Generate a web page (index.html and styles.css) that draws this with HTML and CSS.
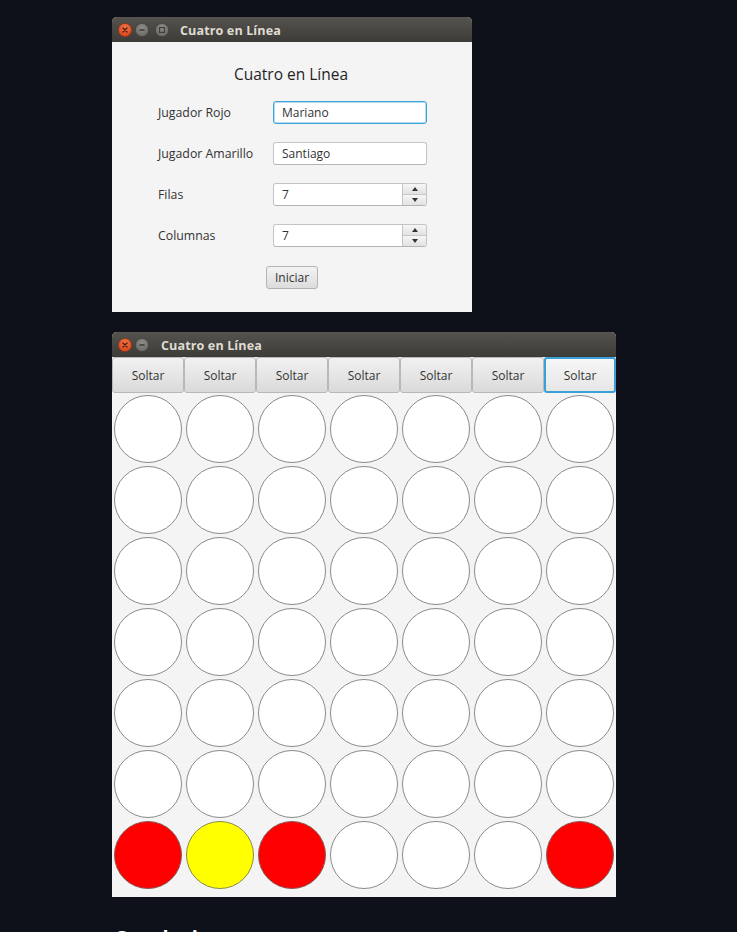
FILE: index.html
```html
<!DOCTYPE html>
<html lang="es">
<head>
<meta charset="utf-8">
<title>Cuatro en Línea</title>
<link rel="stylesheet" href="styles.css">
</head>
<body>
<div class="desk">
  <div class="win win-setup">
    <div class="titlebar">
      <div class="wbtns">
        <svg class="wbtn" width="14" height="14" viewBox="0 0 14 14"><defs><radialGradient id="gc" cx="50%" cy="35%" r="65%"><stop offset="0" stop-color="#f4794a"/><stop offset="1" stop-color="#d8431a"/></radialGradient></defs><circle cx="7" cy="7" r="6.6" fill="url(#gc)" stroke="#8c2e10" stroke-width="0.6"/><path d="M5 5 L9 9 M9 5 L5 9" stroke="#4a1a08" stroke-width="1.3" stroke-linecap="round"/></svg>
        <svg class="wbtn" width="14" height="14" viewBox="0 0 14 14"><defs><radialGradient id="gm" cx="50%" cy="35%" r="65%"><stop offset="0" stop-color="#8f8d88"/><stop offset="1" stop-color="#6a6864"/></radialGradient></defs><circle cx="7" cy="7" r="6.6" fill="url(#gm)" stroke="#3a3935" stroke-width="0.6"/><path d="M4.5 7 H9.5" stroke="#3b3a36" stroke-width="1.3"/></svg>
        <svg class="wbtn wbtn-max" width="14" height="14" viewBox="0 0 14 14"><circle cx="7" cy="7" r="6.6" fill="url(#gm)" stroke="#3a3935" stroke-width="0.6"/><rect x="4.6" y="4.6" width="4.8" height="4.8" fill="none" stroke="#3b3a36" stroke-width="1.1"/></svg>
      </div>
      <span class="wtitle">Cuatro en Línea</span>
    </div>
    <div class="setup-body">
      <div class="setup-heading">Cuatro en Línea</div>
      <div class="form">
        <span class="lbl">Jugador Rojo</span>
        <div class="field field-focused">Mariano</div>
        <span class="lbl">Jugador Amarillo</span>
        <div class="field">Santiago</div>
        <span class="lbl">Filas</span>
        <div class="field spinner"><span class="spin-val">7</span><span class="spin-arrows"><span class="arr arr-up"></span><span class="arr arr-down"></span></span></div>
        <span class="lbl">Columnas</span>
        <div class="field spinner"><span class="spin-val">7</span><span class="spin-arrows"><span class="arr arr-up"></span><span class="arr arr-down"></span></span></div>
      </div>
      <div class="btn-row"><button class="btn">Iniciar</button></div>
    </div>
  </div>

  <div class="win win-board">
    <div class="titlebar titlebar-2">
      <div class="wbtns">
        <svg class="wbtn" width="14" height="14" viewBox="0 0 14 14"><circle cx="7" cy="7" r="6.6" fill="url(#gc)" stroke="#8c2e10" stroke-width="0.6"/><path d="M5 5 L9 9 M9 5 L5 9" stroke="#4a1a08" stroke-width="1.3" stroke-linecap="round"/></svg>
        <svg class="wbtn" width="14" height="14" viewBox="0 0 14 14"><circle cx="7" cy="7" r="6.6" fill="url(#gm)" stroke="#3a3935" stroke-width="0.6"/><path d="M4.5 7 H9.5" stroke="#3b3a36" stroke-width="1.3"/></svg>
      </div>
      <span class="wtitle">Cuatro en Línea</span>
    </div>
    <div class="drops">
      <button class="drop">Soltar</button>
      <button class="drop">Soltar</button>
      <button class="drop">Soltar</button>
      <button class="drop">Soltar</button>
      <button class="drop">Soltar</button>
      <button class="drop">Soltar</button>
      <button class="drop drop-focused">Soltar</button>
    </div>
    <div class="board">
      <span class="cell"></span><span class="cell"></span><span class="cell"></span><span class="cell"></span><span class="cell"></span><span class="cell"></span><span class="cell"></span>
      <span class="cell"></span><span class="cell"></span><span class="cell"></span><span class="cell"></span><span class="cell"></span><span class="cell"></span><span class="cell"></span>
      <span class="cell"></span><span class="cell"></span><span class="cell"></span><span class="cell"></span><span class="cell"></span><span class="cell"></span><span class="cell"></span>
      <span class="cell"></span><span class="cell"></span><span class="cell"></span><span class="cell"></span><span class="cell"></span><span class="cell"></span><span class="cell"></span>
      <span class="cell"></span><span class="cell"></span><span class="cell"></span><span class="cell"></span><span class="cell"></span><span class="cell"></span><span class="cell"></span>
      <span class="cell"></span><span class="cell"></span><span class="cell"></span><span class="cell"></span><span class="cell"></span><span class="cell"></span><span class="cell"></span>
      <span class="cell red"></span><span class="cell yellow"></span><span class="cell red"></span><span class="cell"></span><span class="cell"></span><span class="cell"></span><span class="cell red"></span>
    </div>
  </div>

  <h2 class="conclusion">Conclusiones</h2>
</div>
</body>
</html>
```

FILE: styles.css
```css
* { box-sizing: border-box; }
html, body { margin: 0; padding: 0; }
body {
  background: #0e1119;
  font-family: "Open Sans", "DejaVu Sans", sans-serif;
  height: 932px;
  overflow: hidden;
}
.desk {
  padding: 17px 0 0 112px;
  display: flex;
  flex-direction: column;
  align-items: flex-start;
}
.win {
  border-radius: 5px 5px 0 0;
  overflow: hidden;
  background: #f4f4f4;
}
.win-setup { width: 360px; height: 295px; }
.win-board { width: 504px; height: 565px; margin-top: 20px; }

.titlebar {
  height: 25px;
  background: linear-gradient(#55534e, #3c3b37);
  display: flex;
  align-items: center;
  padding-left: 6px;
  padding-top: 1px;
}
.wbtns { display: flex; align-items: center; gap: 3px; }
.wbtn { display: block; }
.wbtn-max { margin-left: 3px; }
.wtitle {
  margin-left: 11px;
  font-weight: 700;
  font-size: 12.6px;
  color: #dfdbd2;
  letter-spacing: 0.1px;
}
.titlebar-2 .wtitle { margin-left: 12px; }

.setup-body {
  height: 270px;
  padding-top: 22px;
  display: flex;
  flex-direction: column;
}
.setup-heading {
  text-align: center;
  font-size: 15.5px;
  line-height: 20px;
  color: #1f1f1f;
  margin-left: -2px;
}
.form {
  margin-top: 17px;
  display: grid;
  grid-template-columns: 115px 154px;
  grid-auto-rows: 23px;
  row-gap: 18px;
  padding-left: 46px;
  align-items: center;
}
.lbl {
  font-size: 12.3px;
  color: #333;
}
.field {
  height: 23px;
  background: #fff;
  border: 1px solid #c4c4c4;
  border-bottom-color: #b4b4b4;
  border-radius: 3px;
  padding-left: 8px;
  font-size: 12px;
  color: #333;
  display: flex;
  align-items: center;
}
.field-focused {
  border-color: #3aa2d8;
  box-shadow: inset 0 0 0 1px #b5dcf1;
}
.spinner { padding-left: 0; }
.spin-val { flex: 1; padding-left: 8px; }
.spin-arrows {
  width: 24px;
  height: 100%;
  display: flex;
  flex-direction: column;
  border-left: 1px solid #c4c4c4;
  border-radius: 0 2px 2px 0;
  overflow: hidden;
}
.arr {
  flex: 1;
  display: flex;
  align-items: center;
  justify-content: center;
  background: linear-gradient(#f6f6f6, #e2e2e2);
}
.arr-up { border-bottom: 1px solid #c8c8c8; }
.arr::after {
  content: "";
  width: 0; height: 0;
  border-left: 3.5px solid transparent;
  border-right: 3.5px solid transparent;
}
.arr-up::after { border-bottom: 4px solid #333; }
.arr-down::after { border-top: 4px solid #333; }

.btn-row {
  margin-top: 19px;
  display: flex;
  justify-content: center;
}
.btn {
  width: 52px;
  height: 23px;
  padding: 0;
  font-family: inherit;
  font-size: 12px;
  color: #333;
  border: 1px solid #b3b3b3;
  border-radius: 3px;
  background: linear-gradient(#f3f3f3, #dcdcdc);
}

.drops {
  display: flex;
  height: 36px;
}
.drop {
  width: 72px;
  height: 36px;
  margin: 0;
  padding: 0;
  font-family: inherit;
  font-size: 12px;
  color: #333;
  border: 1px solid #b8b8b8;
  border-radius: 3px;
  background: linear-gradient(#f1f1f1, #dadada);
}
.drop-focused {
  border: 2px solid #3aa0d8;
  background: linear-gradient(#f7f7f7, #e6e6e6);
}
.board {
  display: grid;
  grid-template-columns: repeat(7, 72px);
  grid-auto-rows: 71px;
}
.cell {
  width: 68px;
  height: 68px;
  margin: 2px 2px 0 2px;
  border-radius: 50%;
  background: #fff;
  border: 1px solid #8a8a8a;
}
.cell.red { background: #ff0000; border-color: #8a5a5a; }
.cell.yellow { background: #ffff00; border-color: #8a8a4a; }

.conclusion {
  margin: 29px 0 0 2px;
  font-size: 20px;
  line-height: 24px;
  font-weight: 700;
  color: #fff;
}
```
